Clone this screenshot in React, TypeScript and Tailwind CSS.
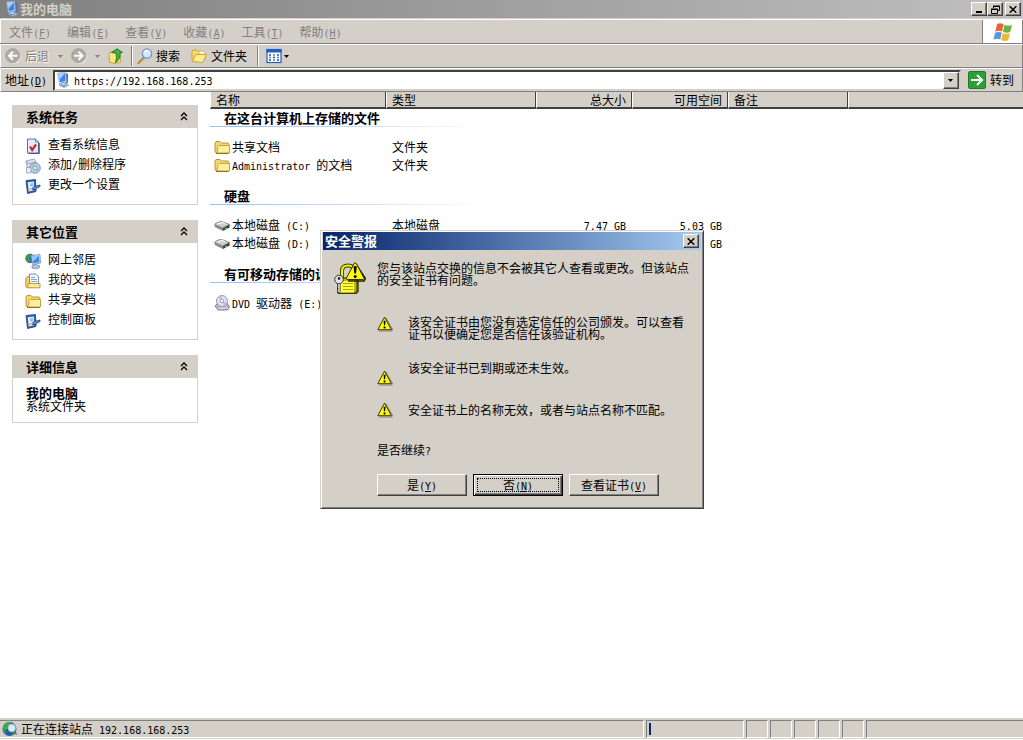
import React from 'react';

const RAISED =
  'border border-t-white border-l-white border-r-[#404040] border-b-[#404040] bg-[#d4d0c8] shadow-[inset_-1px_-1px_#808080]';

/* Half-width runs are set in a monospace face that is half as wide as a CJK glyph. */
function T({ children }: { children: string }) {
  const parts = children.split(/([\x20-\x7e]+)/);
  return (
    <>
      {parts.map((p, i) =>
        i % 2 ? (
          <span key={i} className="whitespace-pre font-['DejaVu_Sans_Mono',monospace] text-[10px] leading-none">
            {p}
          </span>
        ) : (
          p
        ),
      )}
    </>
  );
}

function Key({ text, k }: { text: string; k: string }) {
  return (
    <>
      {text}
      <span className="font-['DejaVu_Sans_Mono',monospace] text-[10px] leading-none">
        (<u className="underline-offset-1">{k}</u>)
      </span>
    </>
  );
}

type IconProps = { className?: string };

function ComputerIcon({ className = 'size-4' }: IconProps) {
  return (
    <svg viewBox="0 0 16 16" className={className} aria-hidden="true">
      <path d="M10 1l3 .8v8.700L10.500 12z" fill="#5f6f92" />
      <path d="M2.500 1l8-.5 1 9.500-7 1.500z" fill="#dbe8f8" stroke="#8aa3c8" strokeWidth=".7" />
      <path d="M3.500 2l6.300-.4.8 7.400-5.600 1.200z" fill="#3f83ea" />
      <path d="M3.500 2l6.300-.4L4.600 7.500z" fill="#a3d0ff" />
      <path d="M4 13l3.500-2.500 4.500 1 1.500 1.800L9 15.500z" fill="#c6d2e4" stroke="#7486a4" strokeWidth=".7" />
      <path d="M6 13l3 1 2.500-1.500" stroke="#4a83dc" fill="none" />
    </svg>
  );
}

function FolderIcon({ className = 'size-4' }: IconProps) {
  return (
    <svg viewBox="0 0 16 16" className={className} aria-hidden="true">
      <path d="M1 13V4l1-1.500h4L7.500 4H14l.8 1v8.500H2z" fill="#f3d66c" stroke="#b8902c" strokeWidth=".9" />
      <path d="M4 7.500L5 6.500h10.500V13l-1 1H3z" fill="#fcef9f" stroke="#c39c35" strokeWidth=".9" />
      <path d="M2 14.500h12.500l1-1" stroke="#8d7123" fill="none" />
    </svg>
  );
}

function OpenFolderIcon() {
  return (
    <svg viewBox="0 0 16 16" className="size-4" aria-hidden="true">
      <path d="M1 12V3l1-1h4l1.500 1.500H12V7" fill="#f7dc72" stroke="#c8982a" strokeWidth=".9" />
      <path d="M8 3h4l2 2v6H8z" fill="#fff7cf" stroke="#c8a344" strokeWidth=".7" />
      <path d="M1.500 13.500L4.500 6.500H15.500L12 14.500z" fill="#fdee8e" stroke="#c8982a" strokeWidth=".9" />
    </svg>
  );
}

function DiskIcon() {
  return (
    <svg viewBox="0 0 16 16" className="size-4" aria-hidden="true">
      <path d="M.4 7.500Q1 6 6 4.500q2-.3 9.500 3L9 11z" fill="#cfcfcf" stroke="#7c7c7c" strokeWidth=".8" />
      <path d="M.3 7.500L9 11v3L.8 10z" fill="#8a8a8a" />
      <path d="M9 11l6.600-3.500v3L9 14z" fill="#3f3f3f" />
      <path d="M11 12l1.700-.9" stroke="#5ee35e" strokeWidth="1.200" />
      <path d="M3.500 7l4.500-1.500 3 1" stroke="#fff" fill="none" />
    </svg>
  );
}

function DvdIcon() {
  return (
    <svg viewBox="0 0 16 16" className="size-4" aria-hidden="true">
      <path d="M1 11l3-3h9l2.500 4-2 3H4z" fill="#b4b6bd" stroke="#6e7078" strokeWidth=".8" />
      <path d="M4.500 13.500l9-.5" stroke="#eee" />
      <circle cx="8" cy="6" r="5.500" fill="#dfe2f2" stroke="#8388a0" strokeWidth=".8" />
      <path d="M8 6L4 2.500A5 5 0 018 1z" fill="#b8c6f5" />
      <path d="M8 6l5 1.500A5 5 0 0110 11z" fill="#c9b7e6" />
      <circle cx="8" cy="6" r="1.700" fill="#fff" stroke="#7d8299" strokeWidth=".7" />
    </svg>
  );
}

function CheckDocIcon() {
  return (
    <svg viewBox="0 0 16 16" className="size-4" aria-hidden="true">
      <path d="M2.500 1h8l3 3v11h-11z" fill="#e3eafa" stroke="#5877a8" />
      <path d="M10.500 1v3h3" fill="#b8c9e6" stroke="#5877a8" strokeWidth=".8" />
      <path d="M14.200 5v10.700H3.500" stroke="#2c436e" fill="none" />
      <path d="M5 8.500l2.200 3.500L11 6.500" fill="none" stroke="#d3232b" strokeWidth="2.200" />
    </svg>
  );
}

function ProgramsIcon() {
  return (
    <svg viewBox="0 0 16 16" className="size-4" aria-hidden="true">
      <path d="M1 3l8-2 2.500 4v5L3 12z" fill="#dbe5f3" stroke="#7e93b4" strokeWidth=".8" />
      <path d="M1 3l2 2.500 8-1" stroke="#7e93b4" strokeWidth=".8" fill="none" />
      <circle cx="10" cy="10" r="5.300" fill="#bccbe4" stroke="#6d84ae" strokeWidth=".8" />
      <path d="M10 10L6 7a5 5 0 013-2z" fill="#8ed38e" />
      <path d="M10 10l5 1a5 5 0 01-3 4z" fill="#9dbdf3" />
      <circle cx="10" cy="10" r="1.700" fill="#fff" stroke="#6c81a5" strokeWidth=".7" />
      <path d="M1.500 9.500h4.500v5.500H1.500z" fill="#e6ecf5" stroke="#7e93b4" strokeWidth=".7" />
    </svg>
  );
}

function SettingIcon() {
  return (
    <svg viewBox="0 0 16 16" className="size-4" aria-hidden="true">
      <path d="M1 2.500l9.500-1 .5 12-8.500 2z" fill="#2c62b5" stroke="#1c3d77" strokeWidth=".8" />
      <path d="M2.800 4.200l6-.7.4 8.700-5.500 1.200z" fill="#e6f1fd" />
      <path d="M5 5.500l3-.5v3l-3 .5z" fill="#8dbaf0" />
      <path d="M7 10.500l2.500-2.500h2l3.500-1v1.500l-3 1.500-1.500 1-2.500 1z" fill="#6c93d0" stroke="#173a75" strokeWidth=".8" />
      <path d="M4.500 10.500l1.500 1.500" stroke="#e0a72e" strokeWidth="1.200" />
    </svg>
  );
}

function NetworkIcon() {
  return (
    <svg viewBox="0 0 16 16" className="size-4" aria-hidden="true">
      <circle cx="5" cy="5.500" r="4.700" fill="#2f6fb5" />
      <path d="M.7 5q.8-4 4.800-4.200l1.500 2-3 2 1 4.200-2 .5q-2.300-2-2.300-4.500z" fill="#3f9a45" />
      <path d="M6 2.500l9-1 .5 8.500-8 1.500z" fill="#dbe7f7" stroke="#5b7cae" strokeWidth=".7" />
      <path d="M7 3.500l7-.8.5 6.500-6.500 1z" fill="#3f8aea" />
      <path d="M7 3.500l7-.8L7.800 8.500z" fill="#9ccbff" />
      <path d="M7 13l4-1.500 4 1.500-1 2-3.500.8L7 15z" fill="#b8c6dd" stroke="#667da3" strokeWidth=".7" />
    </svg>
  );
}

function DocumentsIcon() {
  return (
    <svg viewBox="0 0 16 16" className="size-4" aria-hidden="true">
      <path d="M.8 13.500V5l1.500-1.500H6V14.500H2z" fill="#f2d269" stroke="#a9852a" strokeWidth=".8" />
      <path d="M4.500 1h6l3 2.500v9h-9z" fill="#f8fafe" stroke="#5e7db3" strokeWidth=".9" />
      <path d="M6 4.500h4M6 6.500h6M6 8.500h6" stroke="#7e9ac8" strokeWidth=".9" />
      <path d="M2 14.800l1.500-4.300h11.500v4.300z" fill="#fbe98c" stroke="#a9852a" strokeWidth=".8" />
    </svg>
  );
}

function GlobeIcon() {
  return (
    <svg viewBox="0 0 16 16" className="size-4" aria-hidden="true">
      <circle cx="7.500" cy="8" r="7" fill="#1f5ba4" />
      <path d="M1 6q1-4.500 6-5l3 1-4 3-.5 3-2.500 1 1.500 4Q1 12 1 6z" fill="#3faa48" />
      <path d="M9 14l4-2 1-4-3 1z" fill="#2e8f3a" />
      <circle cx="9.800" cy="7" r="3.900" fill="#d8ecfb" stroke="#7fa9cc" strokeWidth=".8" />
      <path d="M12.500 10.500l2 3" stroke="#5a6f86" strokeWidth="1.500" />
    </svg>
  );
}

function WarnIcon() {
  return (
    <svg viewBox="0 0 16 16" className="size-4" aria-hidden="true">
      <path d="M8.500 1.500L15.500 13.500 14.500 15H2" fill="none" stroke="#808080" strokeWidth="1.200" />
      <path d="M7.500 1.200L14.300 13.700H.8z" fill="#ffff00" stroke="#3c3c00" strokeLinejoin="round" />
      <path d="M6.600 4.800h1.900l-.4 4.500H7z" fill="#000" />
      <rect x="6.600" y="10.500" width="1.900" height="1.900" fill="#000" />
    </svg>
  );
}

function LockIcon() {
  return (
    <svg viewBox="0 0 32 32" className="size-8 shrink-0" aria-hidden="true">
      <path d="M8 17V9q0-5.500 6-5.500t6 5.500v8" fill="none" stroke="#3c3c00" strokeWidth="4" />
      <path d="M8 17V9q0-5.500 6-5.500t6 5.500v8" fill="none" stroke="#f2f200" strokeWidth="2.200" />
      <path d="M4 31.500h18l2-2V18" fill="none" stroke="#404000" strokeWidth="1.500" />
      <path d="M3.500 18.500L6 16h17v12.500L20.500 31h-17z" fill="#b8b800" stroke="#303000" />
      <path d="M4 19h16v11.500H4z" fill="#ffff3c" />
      <path d="M9 21.500h10M9 24.500h10M9 27.500h10" stroke="#a8a800" />
      <path d="M21.500 1.500L31.500 16.500 30 19H14" fill="none" stroke="#202000" strokeWidth="1.500" />
      <path d="M20.500 .800Q21.500 .500 22.500 2L30 16.300q0 1.200-1.200 1.200H13.300q-1.300-.3-.8-1.500z" fill="#ffff00" stroke="#303000" />
      <path d="M19.500 4.500q1.800-1.200 3.300 0l-.8 7h-1.600z" fill="#000" />
      <circle cx="21.200" cy="14.500" r="1.500" fill="#000" />
      <circle cx="5" cy="17.500" r="4.300" fill="#e8e8e8" stroke="#303030" />
      <circle cx="5" cy="16.500" r="1.400" fill="#303030" />
      <path d="M3.700 21.500h2.500v8l-1.300 1.500-1.200-1.500v-2l1-1-1-1z" fill="#e0e0e0" stroke="#404040" strokeWidth=".8" />
    </svg>
  );
}

function RoundArrow({ flip }: { flip?: boolean }) {
  return (
    <svg viewBox="0 0 16 16" className="size-4" aria-hidden="true">
      <circle cx="8.500" cy="8.500" r="7" fill="#fff" />
      <circle cx="7.700" cy="7.700" r="7" fill="#aeaca6" stroke="#96948e" strokeWidth=".8" />
      <path
        d={flip ? 'M3 7.700h8.500M7.500 3.700l4 4-4 4' : 'M12.500 7.700H4M8 3.700l-4 4 4 4'}
        fill="none"
        stroke="#fbfaf8"
        strokeWidth="2"
      />
    </svg>
  );
}

function UpIcon() {
  return (
    <svg viewBox="0 0 16 16" className="size-4" aria-hidden="true">
      <path d="M1 6.500L2.500 4H5l1 1h5.500L13 14l-6 1.500-5.500-1.200z" fill="#fbe588" stroke="#c29a30" strokeWidth=".9" />
      <path d="M3.500 4.500L9 .800 14.500 4.500l-2.500.5q1 6-4.500 9.500Q9.500 9 8 5z" fill="#3fb83a" stroke="#16701a" strokeWidth=".9" strokeLinejoin="round" />
    </svg>
  );
}

function SearchIcon() {
  return (
    <svg viewBox="0 0 16 16" className="size-4" aria-hidden="true">
      <path d="M7 9.500L1.500 15" stroke="#b98a5a" strokeWidth="2.400" strokeLinecap="round" />
      <circle cx="10" cy="5.500" r="4.700" fill="#cfe8fd" stroke="#6c94c6" strokeWidth="1.200" />
      <path d="M7.500 4.500Q8.500 2.500 11 2.500" stroke="#fff" strokeWidth="1.400" fill="none" />
    </svg>
  );
}

function ViewsIcon() {
  return (
    <svg viewBox="0 0 16 16" className="size-4" aria-hidden="true">
      <rect x="1" y="1.500" width="14" height="13" fill="#fff" stroke="#1d5fc2" strokeWidth="1.200" />
      <path d="M.5 1h15v3.500H.5z" fill="#1d5fc2" />
      <path d="M3 7h2M11 7h2M7 9.500h2M3 12h2M11 12h2" stroke="#3b4a66" strokeWidth="1.600" />
      <path d="M7 7h2M3 9.500h2M11 9.500h2M7 12h2" stroke="#4f86c8" strokeWidth="1.600" />
    </svg>
  );
}

function FlagIcon() {
  return (
    <svg viewBox="0 0 20 20" className="size-5" aria-hidden="true">
      <path d="M4 2.200q3-1.700 6.500 0L9 9.500q-3-1.500-6.700.2z" fill="#ea6238" />
      <path d="M11.500 2.800q3.500 1.700 7.500.3l-1.800 7q-3.700 1.400-7.200-.3z" fill="#6db33f" />
      <path d="M2 10.800q3.500-1.700 6.800-.2L7.200 17.500Q4 16 .5 17.700z" fill="#5a96e0" />
      <path d="M9.800 11q3.500 1.600 7.200.2l-1.800 7.100q-3.500 1.300-7-.3z" fill="#f2b632" />
    </svg>
  );
}

function Caret({ className = 'fill-black' }: IconProps) {
  return (
    <svg viewBox="0 0 5 3" className={`h-[3px] w-[5px] ${className}`} aria-hidden="true">
      <path d="M0 0h5L2.500 3z" />
    </svg>
  );
}

function CloseGlyph() {
  return (
    <svg viewBox="0 0 8 7" className="h-[7px] w-2" aria-hidden="true">
      <path d="M.7.300L7.300 6.700M7.300.300L.7 6.700" stroke="#000" strokeWidth="1.500" />
    </svg>
  );
}

function Chevrons() {
  return (
    <svg viewBox="0 0 8 9" className="h-[9px] w-2" aria-hidden="true">
      <path d="M1 4l3-3 3 3M1 8l3-3 3 3" fill="none" stroke="#000" strokeWidth="1.300" />
    </svg>
  );
}

function TitleBar() {
  return (
    <header className="flex h-[18px] items-center bg-linear-to-r from-[#808080] to-[#c0c0c0] pr-0.5 pl-1">
      <ComputerIcon />
      <h1 className="flex-1 text-[13px] font-bold text-[#d4d0c8]">我的电脑</h1>
      <button aria-label="最小化" className={`${RAISED} flex h-3.5 w-4 items-end justify-center pb-0.5`}>
        <span className="h-0.5 w-1.5 bg-black" />
      </button>
      <button aria-label="还原" className={`${RAISED} mr-0.5 flex h-3.5 w-4 items-center justify-center`}>
        <svg viewBox="0 0 9 9" className="size-[9px]" aria-hidden="true">
          <path d="M2.500 3V1.500h6v4H7M2 1h7" fill="none" stroke="#000" />
          <path d="M.5 4.500h6v4h-6zM0 4h7" fill="none" stroke="#000" />
        </svg>
      </button>
      <button aria-label="关闭" className={`${RAISED} flex h-3.5 w-4 items-center justify-center`}>
        <CloseGlyph />
      </button>
    </header>
  );
}

const MENUS = [
  ['文件', 'F'],
  ['编辑', 'E'],
  ['查看', 'V'],
  ['收藏', 'A'],
  ['工具', 'T'],
  ['帮助', 'H'],
];

function MenuBar() {
  return (
    <div className="mt-px flex h-[25px] border-t border-b border-t-white border-b-[#808080]">
      <nav className="flex flex-1 items-center gap-4 border-r border-l border-r-[#808080] border-l-white pl-2 text-[#808080] [text-shadow:1px_1px_#fff]">
        {MENUS.map(([t, k]) => (
          <button key={k} className="whitespace-nowrap">
            <Key text={t} k={k} />
          </button>
        ))}
      </nav>
      <div className="flex w-10 items-center justify-center border-r border-[#808080] bg-white">
        <FlagIcon />
      </div>
    </div>
  );
}

function Divider() {
  return <span className="h-5 w-0.5 border-r border-l border-r-white border-l-[#808080]" />;
}

function ToolBar() {
  return (
    <div className="flex h-6 items-center border-t border-r border-b border-l border-t-white border-r-[#808080] border-b-[#808080] border-l-white pl-1">
      <button disabled className="flex items-center gap-1 text-[#808080] [text-shadow:1px_1px_#fff]">
        <RoundArrow />
        后退
      </button>
      <button disabled aria-label="后退列表" className="ml-2 p-px">
        <Caret className="fill-[#808080]" />
      </button>
      <button disabled aria-label="前进" className="ml-[7px]">
        <RoundArrow flip />
      </button>
      <button disabled aria-label="前进列表" className="ml-[7px] p-px">
        <Caret className="fill-[#808080]" />
      </button>
      <button aria-label="向上" className="mr-[7px] ml-[7px]">
        <UpIcon />
      </button>
      <Divider />
      <button className="ml-1 flex items-center gap-[3px]">
        <SearchIcon />
        搜索
      </button>
      <button className="mr-2.5 ml-[11px] flex items-center gap-1">
        <OpenFolderIcon />
        文件夹
      </button>
      <Divider />
      <button aria-label="查看方式" className="ml-[7px] flex items-center gap-0.5">
        <ViewsIcon />
        <Caret />
      </button>
    </div>
  );
}

function AddressBar() {
  return (
    <div className="flex h-6 items-center border-t border-r border-b border-l border-t-white border-r-[#808080] border-b-[#808080] border-l-white pl-1">
      <label htmlFor="address" className="w-12 shrink-0 whitespace-nowrap">
        <Key text="地址" k="D" />
      </label>
      <div className="flex h-[21px] flex-1 items-center border-2 border-t-[#404040] border-r-[#d4d0c8] border-b-[#d4d0c8] border-l-[#404040] bg-white">
        <ComputerIcon />
        <input
          id="address"
          defaultValue="https://192.168.168.253"
          className="h-full min-w-0 flex-1 bg-transparent pt-0.5 pl-[3px] font-['DejaVu_Sans_Mono',monospace] text-[10px] outline-none"
        />
        <button aria-label="展开" className={`${RAISED} flex h-[17px] w-4 items-center justify-center`}>
          <Caret />
        </button>
      </div>
      <button className="mr-2 ml-[7px] flex items-center gap-1">
        <svg viewBox="0 0 18 18" className="size-[18px]" aria-hidden="true">
          <rect x=".5" y=".5" width="17" height="17" rx="1.500" fill="#2f9e3a" stroke="#1e7b2a" />
          <path d="M3 9h10.500M9 4l5 5-5 5" fill="none" stroke="#fff" strokeWidth="2" />
        </svg>
        转到
      </button>
    </div>
  );
}

function Panel({ title, children }: { title: string; children: React.ReactNode }) {
  return (
    <section>
      <h2 className="flex h-[23px] items-center justify-between bg-[#d4d0c8] pr-2.5 pl-3.5 text-[13px] font-bold">
        {title}
        <button aria-label="折叠">
          <Chevrons />
        </button>
      </h2>
      <div className="border border-t-0 border-[#d4d0c8]">{children}</div>
    </section>
  );
}

function Links({ items }: { items: [React.ReactNode, string][] }) {
  return (
    <ul className="pt-1.5 pb-2.5 pl-3">
      {items.map(([icon, text]) => (
        <li key={text}>
          <a href="#" className="flex h-5 items-center gap-[7px]">
            <span className="pt-1">{icon}</span>
            <span>
              <T>{text}</T>
            </span>
          </a>
        </li>
      ))}
    </ul>
  );
}

function Sidebar() {
  return (
    <aside className="flex w-[210px] shrink-0 flex-col gap-[15px] pt-[13px] pr-3 pl-3">
      <Panel title="系统任务">
        <Links
          items={[
            [<CheckDocIcon />, '查看系统信息'],
            [<ProgramsIcon />, '添加/删除程序'],
            [<SettingIcon />, '更改一个设置'],
          ]}
        />
      </Panel>
      <Panel title="其它位置">
        <Links
          items={[
            [<NetworkIcon />, '网上邻居'],
            [<DocumentsIcon />, '我的文档'],
            [<FolderIcon />, '共享文档'],
            [<SettingIcon />, '控制面板'],
          ]}
        />
      </Panel>
      <Panel title="详细信息">
        <div className="pt-2 pb-2.5 pl-[13px]">
          <p className="text-[13px] leading-[14px] font-bold">我的电脑</p>
          <p className="leading-3">系统文件夹</p>
        </div>
      </Panel>
    </aside>
  );
}

type Row = { icon: React.ReactNode; name: string; type?: string; size?: string; free?: string };

const GROUPS: { title: string; rows: Row[] }[] = [
  {
    title: '在这台计算机上存储的文件',
    rows: [
      { icon: <FolderIcon />, name: '共享文档', type: '文件夹' },
      { icon: <FolderIcon />, name: 'Administrator 的文档', type: '文件夹' },
    ],
  },
  {
    title: '硬盘',
    rows: [
      { icon: <DiskIcon />, name: '本地磁盘 (C:)', type: '本地磁盘', size: '7.47 GB', free: '5.03 GB' },
      { icon: <DiskIcon />, name: '本地磁盘 (D:)', type: '本地磁盘', free: 'GB' },
    ],
  },
  { title: '有可移动存储的设备', rows: [{ icon: <DvdIcon />, name: 'DVD 驱动器 (E:)' }] },
];

const TH = 'border-b-2 border-b-[#404040] border-l border-l-white font-normal px-[5px] py-0';
const TH_SEP = 'border-r border-r-[#404040]';

function FileList() {
  return (
    <main className="min-w-0 flex-1 overflow-hidden">
      <table className="w-full table-fixed border-separate border-spacing-0">
        <colgroup>
          <col className="w-44" />
          <col className="w-[150px]" />
          <col className="w-24" />
          <col className="w-24" />
          <col className="w-[120px]" />
          <col />
        </colgroup>
        <thead>
          <tr className="h-[17px] bg-[#d4d0c8] text-left leading-[14px]">
            <th className={`${TH} ${TH_SEP}`}>名称</th>
            <th className={`${TH} ${TH_SEP}`}>类型</th>
            <th className={`${TH} ${TH_SEP} text-right`}>总大小</th>
            <th className={`${TH} ${TH_SEP} text-right`}>可用空间</th>
            <th className={`${TH} ${TH_SEP}`}>备注</th>
            <th className={TH} />
          </tr>
        </thead>
        {GROUPS.map((g) => (
          <tbody key={g.title}>
            <tr>
              <th colSpan={6} className="p-0 pb-[11px] text-left">
                <div className="h-[17px] pl-3.5 text-[13px] leading-[17px] whitespace-nowrap">{g.title}</div>
                <div className="h-px w-[280px] bg-linear-to-r from-[#9dbcf0] to-white" />
              </th>
            </tr>
            {g.rows.map((r) => (
              <tr key={r.name} className="h-[18px] whitespace-nowrap">
                <td className="p-0 pl-1">
                  <div className="flex items-center gap-0.5">
                    {r.icon}
                    <span>
                      <T>{r.name}</T>
                    </span>
                  </div>
                </td>
                <td className="p-0 pl-1.5">{r.type}</td>
                <td className="p-0 pr-1.5 text-right">
                  <T>{r.size ?? ''}</T>
                </td>
                <td className="p-0 pr-1.5 text-right">
                  <T>{r.free ?? ''}</T>
                </td>
                <td className="p-0" />
                <td className="p-0" />
              </tr>
            ))}
            <tr className="h-[13px]">
              <td colSpan={6} className="p-0" />
            </tr>
          </tbody>
        ))}
      </table>
    </main>
  );
}

function DialogButton({ text, k, focused }: { text: string; k: string; focused?: boolean }) {
  return (
    <button
      className={
        focused
          ? 'h-[22px] w-[90px] border border-black bg-[#d4d0c8] p-[3px] leading-none shadow-[inset_1px_1px_#fff,inset_-1px_-1px_#404040,inset_-2px_-2px_#808080]'
          : `${RAISED} h-[22px] w-[90px] leading-none`
      }
    >
      {focused ? (
        <span className="flex h-full items-center justify-center border border-dotted border-black">
          <span>
            <Key text={text} k={k} />
          </span>
        </span>
      ) : (
        <Key text={text} k={k} />
      )}
    </button>
  );
}

function SecurityDialog() {
  return (
    <div
      role="dialog"
      aria-labelledby="alert-title"
      className="absolute top-[230px] left-[320px] w-96 border border-t-[#d4d0c8] border-r-[#404040] border-b-[#404040] border-l-[#d4d0c8] bg-[#d4d0c8] p-px pb-3 shadow-[inset_1px_1px_#fff,inset_-1px_-1px_#808080]"
    >
      <div className="mx-px flex h-[18px] items-center justify-between bg-linear-to-r from-[#0a246a] to-[#a6caf0] px-0.5">
        <h2 id="alert-title" className="text-[13px] font-bold text-white">
          安全警报
        </h2>
        <button aria-label="关闭" className={`${RAISED} flex h-3.5 w-4 items-center justify-center`}>
          <CloseGlyph />
        </button>
      </div>
      <div className="flex gap-2.5 pt-3 pl-3 leading-3">
        <LockIcon />
        <div className="w-[313px] pl-px">
          <p>您与该站点交换的信息不会被其它人查看或更改。但该站点的安全证书有问题。</p>
          <ul className="mt-[30px]">
            <li className="flex gap-[15px]">
              <WarnIcon />
              <p className="w-[276px]">该安全证书由您没有选定信任的公司颁发。可以查看证书以便确定您是否信任该验证机构。</p>
            </li>
            <li className="mt-[22px] flex gap-[15px]">
              <span className="pt-2">
                <WarnIcon />
              </span>
              <p>该安全证书已到期或还未生效。</p>
            </li>
            <li className="mt-4 flex items-center gap-[15px]">
              <WarnIcon />
              <p>安全证书上的名称无效，或者与站点名称不匹配。</p>
            </li>
          </ul>
          <p className="mt-[26px]">
            <T>是否继续?</T>
          </p>
          <div className="mt-[17px] flex gap-1.5">
            <DialogButton text="是" k="Y" />
            <DialogButton text="否" k="N" focused />
            <DialogButton text="查看证书" k="V" />
          </div>
        </div>
      </div>
    </div>
  );
}

const CELL = 'border border-t-[#808080] border-r-white border-b-white border-l-[#808080]';

function StatusBar() {
  return (
    <footer className="mb-px flex h-[21px] gap-0.5 border-b border-[#d4d0c8] bg-[#d4d0c8] pt-0.5">
      <div className={`${CELL} flex flex-1 items-center gap-[3px] border-l-0 pl-0.5`}>
        <GlobeIcon />
        <span>
          <T>正在连接站点 192.168.168.253</T>
        </span>
      </div>
      <div className={`${CELL} flex w-[98px] items-center pl-0.5`}>
        <span className="h-3 w-0.5 bg-[#0a246a]" />
      </div>
      <div className={`${CELL} w-[22px]`} />
      <div className={`${CELL} w-[22px]`} />
      <div className={`${CELL} w-[22px]`} />
      <div className={`${CELL} w-[22px]`} />
      <div className={`${CELL} w-[22px]`} />
      <div className={`${CELL} w-[157px] border-r-0`} />
    </footer>
  );
}

export default function App() {
  return (
    <div className="relative flex min-h-screen flex-col bg-white font-['Noto_Sans_CJK_SC',sans-serif] text-[12px] leading-4 text-black">
      <TitleBar />
      <div className="bg-[#d4d0c8]">
        <MenuBar />
        <ToolBar />
        <AddressBar />
      </div>
      <div className="flex flex-1">
        <Sidebar />
        <FileList />
      </div>
      <StatusBar />
      <SecurityDialog />
    </div>
  );
}
